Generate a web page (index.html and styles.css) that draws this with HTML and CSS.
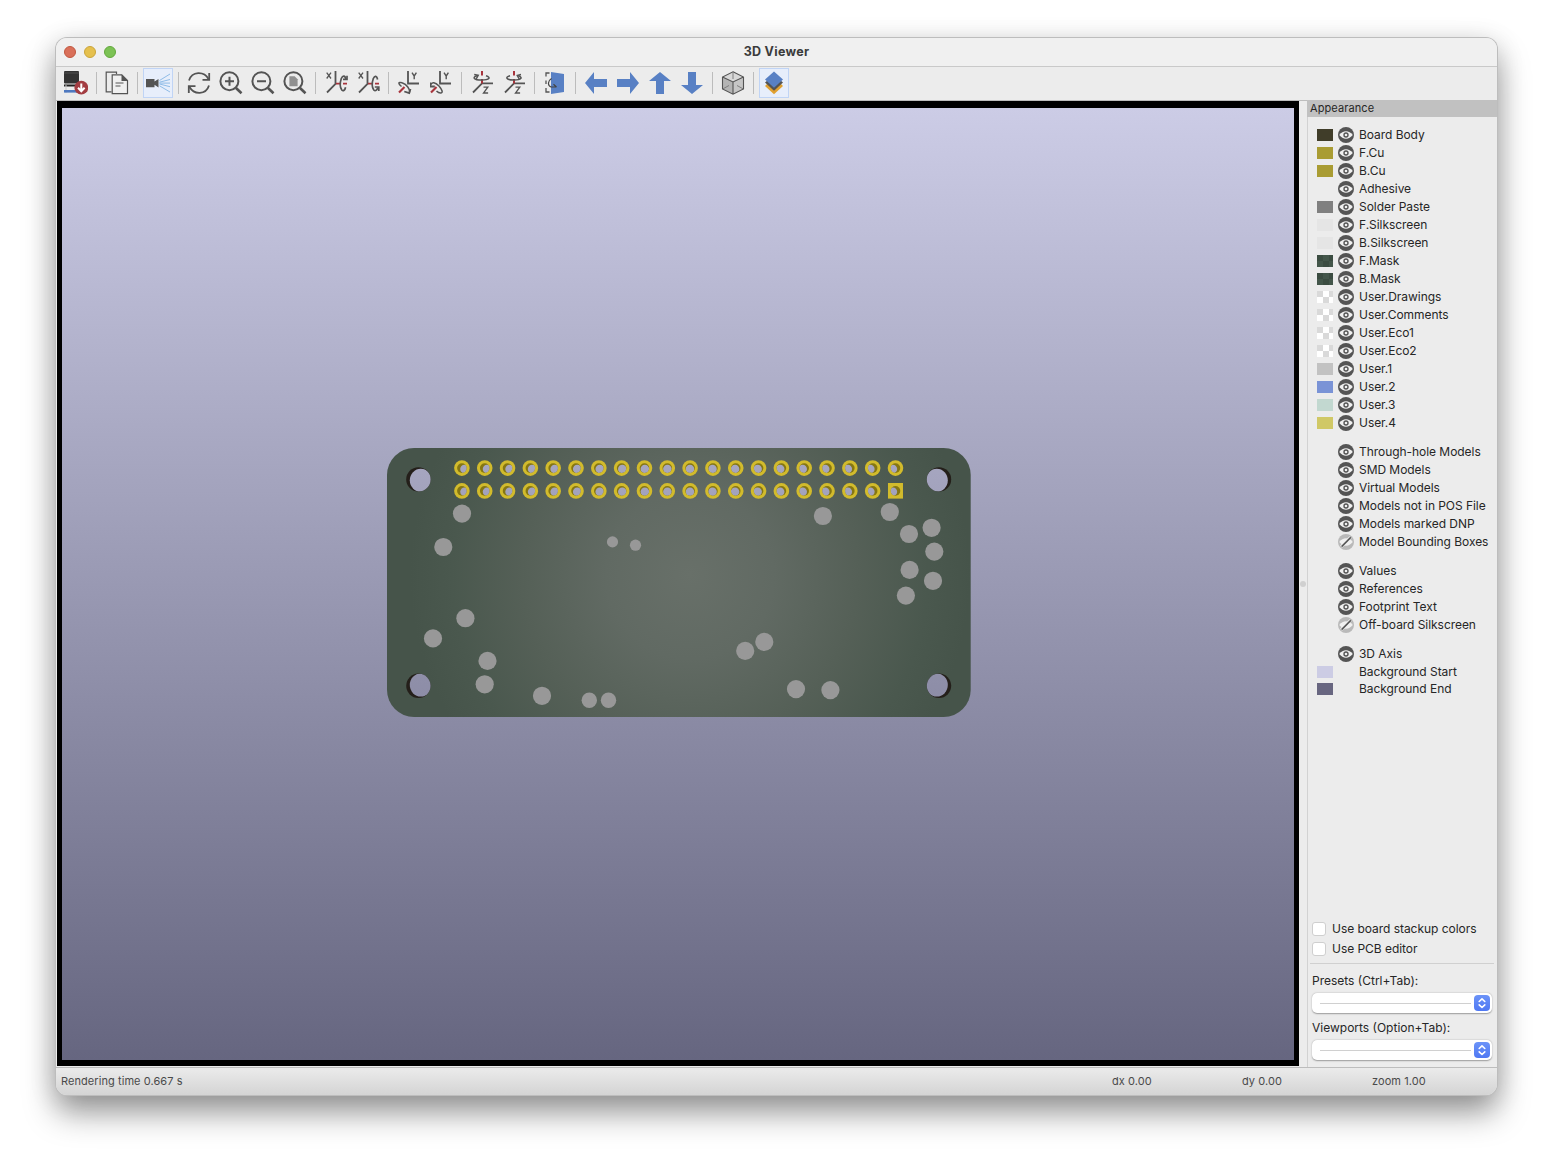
FILE: index.html
```
<!DOCTYPE html>
<html lang="en">
<head>
<meta charset="utf-8">
<title>3D Viewer</title>
<link rel="stylesheet" href="styles.css">
</head>
<body>
<svg class="defs" width="0" height="0">
  <defs>
    <symbol id="eye" viewBox="0 0 16 16"><circle cx="8" cy="8" r="8" fill="#545454"/><path d="M1.2 8Q4.2 4.3 8 4.3T14.8 8Q11.8 11.7 8 11.7T1.2 8Z" fill="#f0f0f0"/><circle cx="8" cy="8" r="2.7" fill="#545454"/><circle cx="8" cy="8" r="1.3" fill="#f0f0f0"/></symbol>
    <symbol id="off" viewBox="0 0 16 16"><circle cx="8" cy="8" r="8" fill="#b9b9b9"/><path d="M1.2 8Q4.2 4.3 8 4.3T14.8 8Q11.8 11.7 8 11.7T1.2 8Z" fill="#f0f0f0"/><path d="M3.2 12.6L12.6 3.2" stroke="#f0f0f0" stroke-width="3"/><path d="M3.6 12.6L12.8 3.4" stroke="#545454" stroke-width="1.5"/></symbol>
    <symbol id="arrow" viewBox="0 0 24 24"><path d="M1 12L10 1V8H23V16H10V23Z" fill="#5880c4"/></symbol>
    <symbol id="lens" viewBox="0 0 24 24"><circle cx="10.4" cy="10.2" r="9" fill="none" stroke="#545454" stroke-width="2"/><path d="M17 17L22.5 22.3" stroke="#545454" stroke-width="2.6"/></symbol>
    <symbol id="axis-x" viewBox="0 0 24 24"><path d="M10.5 0V13L2 21.5" fill="none" stroke="#545454" stroke-width="1.8"/><path d="M11 12.6H15.5M18 12.6H22" stroke="#a8343c" stroke-width="1.8"/><path d="M1.7 1.7L6 7.5M6 1.7L1.7 7.5" stroke="#545454" stroke-width="1.3"/></symbol>
    <symbol id="axis-y" viewBox="0 0 24 24"><path d="M10 0V12.5H21" fill="none" stroke="#545454" stroke-width="1.8"/><path d="M1 21.5L6.5 16" stroke="#a8343c" stroke-width="2.2"/><path d="M14 1.7L16.2 5V8.3M18.4 1.7L16.2 5" fill="none" stroke="#545454" stroke-width="1.4"/></symbol>
    <symbol id="axis-z" viewBox="0 0 24 24"><path d="M22 12.4H11L2 21.5" fill="none" stroke="#545454" stroke-width="1.8"/><path d="M11 0V4.5M11 8V12.5" stroke="#a8343c" stroke-width="2"/><path d="M12.5 16.2H16.8L12.5 22H17.1" fill="none" stroke="#545454" stroke-width="1.3"/></symbol>
    <symbol id="cup" viewBox="0 0 14 14"><path d="M4.2 5.5L7 2.8L9.8 5.5M4.2 8.8L7 11.5L9.8 8.8" fill="none" stroke="#fff" stroke-width="1.6" stroke-linecap="round" stroke-linejoin="round"/></symbol>
  </defs>
</svg>

<div class="window">
  <header class="titlebar">
    <div class="lights"><i class="light red"></i><i class="light yellow"></i><i class="light green"></i></div>
    <h1 class="title">3D Viewer</h1>
  </header>

  <nav class="toolbar">
    <span class="tool"><svg class="icon" viewBox="0 0 24 24"><rect x="0" y="0" width="15" height="12.5" rx="1" fill="#333"/><path d="M0 2H15" stroke="#666" stroke-width=".6"/><path d="M0 14.5H15" stroke="#222" stroke-width="2"/><path d="M2 14V18M13 14V18M2 18V22M13 18V22" stroke="#c8c8c8"/><rect x="0" y="19" width="13" height="2.6" fill="#4f79c0"/><circle cx="17.3" cy="16.7" r="6.9" fill="#a33d42"/><path d="M17.3 12.5V19.5M14 16.8L17.3 20.2L20.6 16.8" fill="none" stroke="#fff" stroke-width="2"/></svg></span>
    <i class="sep"></i>
    <span class="tool"><svg class="icon" viewBox="0 0 24 24"><path d="M11.5 3V1.2H1.2V20.8H6.5" fill="none" stroke="#545454" stroke-width="1.2"/><path d="M7.2 3.8H16.8L22.5 9.5V22.6H7.2Z" fill="#f0f0f0" stroke="#545454" stroke-width="1.2"/><path d="M16.5 3.5V10H23Z" fill="#545454"/><path d="M10.5 12H18.5M10.5 15H15.5" stroke="#545454" stroke-width="1.1"/></svg></span>
    <i class="sep"></i>
    <span class="tool on"><svg class="icon" viewBox="0 0 24 24"><path d="M0 8H8.5V10.5L12.5 8V16.5L8.5 13.8V16.3H0Z" fill="#545454"/><path d="M13.5 9.5L24 3M13.5 11.2L24 8.5M13.5 13L24 15.7M13.5 14.8L24 21M13.5 12.1H24" stroke="#85b5e4" stroke-width=".9"/></svg></span>
    <i class="sep"></i>
    <span class="tool"><svg class="icon" viewBox="0 0 24 24"><path d="M2 9.5C5 0 17 0 21.5 8M22 14.5C19 24 7 24 2.5 16" fill="none" stroke="#545454" stroke-width="1.8"/><path d="M22.2 2V8.8H15.5M1.8 22V15.2H8.5" fill="none" stroke="#545454" stroke-width="1.8"/></svg></span>
    <span class="tool"><svg class="icon" viewBox="0 0 24 24"><use href="#lens"/><path d="M6 10.2H15M10.5 5.7V14.7" stroke="#545454" stroke-width="2"/></svg></span>
    <span class="tool"><svg class="icon" viewBox="0 0 24 24"><use href="#lens"/><path d="M6 10.2H15" stroke="#545454" stroke-width="2"/></svg></span>
    <span class="tool"><svg class="icon" viewBox="0 0 24 24"><use href="#lens"/><path d="M6.4 5.2H11.6L14.6 8.2V15.2H6.4Z" fill="#909090"/></svg></span>
    <i class="sep"></i>
    <span class="tool axis"><svg class="icon" viewBox="0 0 24 24"><use href="#axis-x"/><path d="M20.8 8.2C20.2 4.4 17.8 4.2 16.3 7.5C14.8 12 15 16.5 16.8 19C18.3 20.6 20 19 20.6 16.2" fill="none" stroke="#545454" stroke-width="1.7"/><path d="M18 8.4H22V4.8" fill="none" stroke="#545454" stroke-width="1.7"/></svg></span>
    <span class="tool axis"><svg class="icon" viewBox="0 0 24 24"><use href="#axis-x"/><path d="M20.6 8.5C20 4.8 17.8 4.2 16.3 7.5C14.8 12 15 16.5 16.8 19C18.3 20.6 20 19.3 20.8 16.5" fill="none" stroke="#545454" stroke-width="1.7"/><path d="M17.8 16H21.8V20" fill="none" stroke="#545454" stroke-width="1.7"/></svg></span>
    <i class="sep"></i>
    <span class="tool axis"><svg class="icon" viewBox="0 0 24 24"><use href="#axis-y"/><path d="M3.5 15.5C-.5 12.5 .5 10.5 4 11.8C9 13.5 12 18 11.5 21.5" fill="none" stroke="#545454" stroke-width="1.5"/><path d="M6.3 20.5L11.2 22.2L12.5 18" fill="none" stroke="#545454" stroke-width="1.8"/></svg></span>
    <span class="tool axis"><svg class="icon" viewBox="0 0 24 24"><use href="#axis-y"/><path d="M.5 14.5C1.5 10 5.5 11.5 9 15C12 18.5 13.5 22 10.5 22Q8.5 22 6.5 20" fill="none" stroke="#545454" stroke-width="1.5"/><path d="M.2 11.5V15.5H4.8" fill="none" stroke="#545454" stroke-width="1.8"/></svg></span>
    <i class="sep"></i>
    <span class="tool axis"><svg class="icon" viewBox="0 0 24 24"><use href="#axis-z"/><path d="M6 4.7C1 6.2 2.5 9 10.5 9C18.5 9 20.5 6.5 15 4.8" fill="none" stroke="#545454" stroke-width="1.5"/><path d="M3.2 3.6L7.2 4.4L5.2 8" fill="none" stroke="#545454" stroke-width="1.5"/></svg></span>
    <span class="tool axis"><svg class="icon" viewBox="0 0 24 24"><use href="#axis-z"/><path d="M7 4.7C1.5 6.2 3.5 9 11 9C18.5 9 20 6.5 15.5 4.8" fill="none" stroke="#545454" stroke-width="1.5"/><path d="M18 3.6L14.3 4.4L16.2 8" fill="none" stroke="#545454" stroke-width="1.5"/></svg></span>
    <i class="sep"></i>
    <span class="tool"><svg class="icon" viewBox="0 0 24 24"><path d="M8 1L21 3V21L8 23Z" fill="#5880c4"/><path d="M6.5 2H3V5.5M3 9.5V13M3 17V21H6.5" fill="none" stroke="#545454" stroke-width="1.3"/><path d="M8.5 7.5C4.5 10 4.5 14.5 8 16L13.5 16M10.5 13.2L13.5 16" fill="none" stroke="#444" stroke-width="1.2"/></svg></span>
    <i class="sep"></i>
    <span class="tool"><svg class="icon"><use href="#arrow"/></svg></span>
    <span class="tool"><svg class="icon right"><use href="#arrow"/></svg></span>
    <span class="tool"><svg class="icon up"><use href="#arrow"/></svg></span>
    <span class="tool"><svg class="icon down"><use href="#arrow"/></svg></span>
    <i class="sep"></i>
    <span class="tool"><svg class="icon" viewBox="0 0 24 24"><path d="M12 .8L22.5 6V18L12 23.2L1.5 18V6Z" fill="#b4b4b4"/><path d="M12 .8L22.5 6L12 11L1.5 6Z" fill="#d8d8d8"/><path d="M12 11L22.5 6V18L12 23.2Z" fill="#c6c6c6"/><path d="M12 .8L22.5 6V18L12 23.2L1.5 18V6ZM1.5 6L12 11L22.5 6M12 11V23.2" fill="none" stroke="#545454" stroke-width="1.1"/><path d="M12 1V8M2 17.8L8 14.5M22 17.8L16 14.5" stroke="#777" stroke-width=".9"/></svg></span>
    <i class="sep"></i>
    <span class="tool on"><svg class="icon" viewBox="0 0 24 24"><path d="M12 6L21 15L12 23.3L3 15Z" fill="#e0a030"/><path d="M12 4L21 11.5L12 19.8L3 11.5Z" fill="#545454"/><path d="M12 .5L21 8.5L12 16.8L3 8.5Z" fill="#5880c4"/></svg></span>
  </nav>

  <main class="content">
    <section class="viewport">
      <svg class="scene" viewBox="62 108 1232 952">
        <defs>
          <linearGradient id="sky" gradientUnits="userSpaceOnUse" x1="0" y1="108" x2="0" y2="1060"><stop offset="0" stop-color="#cccce6"/><stop offset="1" stop-color="#666680"/></linearGradient>
          <radialGradient id="mask" gradientUnits="userSpaceOnUse" cx="690" cy="575" r="280"><stop offset="0" stop-color="#687069"/><stop offset=".3" stop-color="#616a63"/><stop offset=".6" stop-color="#556057"/><stop offset=".85" stop-color="#4a584e"/><stop offset="1" stop-color="#46544a"/></radialGradient>
          <clipPath id="hole-tl"><circle cx="418.4" cy="479.4" r="12.2"/></clipPath>
          <clipPath id="hole-tr"><circle cx="939" cy="479.4" r="12.2"/></clipPath>
          <clipPath id="hole-bl"><circle cx="418.4" cy="685.8" r="12.2"/></clipPath>
          <clipPath id="hole-br"><circle cx="939" cy="685.8" r="12.2"/></clipPath>
        </defs>
        <rect x="62" y="108" width="1232" height="952" fill="url(#sky)"/>
        <rect x="387" y="448" width="583.7" height="269" rx="27" fill="url(#mask)"/>
        <g fill="#241f1a"><circle cx="418.4" cy="479.4" r="12.2"/><circle cx="939" cy="479.4" r="12.2"/><circle cx="418.4" cy="685.8" r="12.2"/><circle cx="939" cy="685.8" r="12.2"/></g>
        <g fill="url(#sky)">
          <g clip-path="url(#hole-tl)"><ellipse cx="420.8" cy="480.3" rx="11" ry="11.5"/></g>
          <g clip-path="url(#hole-tr)"><ellipse cx="936.8" cy="480.3" rx="11" ry="11.5"/></g>
          <g clip-path="url(#hole-bl)"><ellipse cx="420.8" cy="685" rx="11" ry="11.5"/></g>
          <g clip-path="url(#hole-br)"><ellipse cx="936.8" cy="685" rx="11" ry="11.5"/></g>
        </g>
        <g fill="#989898">
          <circle cx="462" cy="513.6" r="9.1"/><circle cx="443.3" cy="547" r="9.1"/><circle cx="612.5" cy="541.9" r="5.6"/><circle cx="635.5" cy="545.2" r="5.6"/>
          <circle cx="822.9" cy="516" r="9.1"/><circle cx="889.8" cy="512" r="9.1"/><circle cx="909" cy="534" r="9.1"/><circle cx="931.6" cy="527.8" r="9.1"/><circle cx="934.3" cy="551.6" r="9.1"/><circle cx="909.6" cy="569.9" r="9.1"/><circle cx="933" cy="580.8" r="9.1"/><circle cx="905.9" cy="595.6" r="9.1"/>
          <circle cx="465.4" cy="618.2" r="9.1"/><circle cx="433" cy="638.4" r="9.1"/><circle cx="487.5" cy="660.9" r="9.1"/><circle cx="484.7" cy="684.3" r="9.1"/><circle cx="542" cy="695.8" r="9.1"/><circle cx="589.3" cy="700.3" r="7.7"/><circle cx="608.5" cy="700.3" r="7.7"/>
          <circle cx="745.2" cy="650.9" r="9.1"/><circle cx="764.3" cy="641.9" r="9.1"/><circle cx="796" cy="689.1" r="9.1"/><circle cx="830.4" cy="690.1" r="9.1"/>
        </g>
        <g id="pads"></g>
      </svg>
    </section>
    <div class="sash"><i class="grip"></i></div>

    <aside class="panel">
      <h2 class="caption">Appearance</h2>
      <ul class="layers">
        <li><i class="swatch body"></i><svg class="eye"><use href="#eye"/></svg>Board Body</li>
        <li><i class="swatch copper"></i><svg class="eye"><use href="#eye"/></svg>F.Cu</li>
        <li><i class="swatch copper"></i><svg class="eye"><use href="#eye"/></svg>B.Cu</li>
        <li><i class="swatch"></i><svg class="eye"><use href="#eye"/></svg>Adhesive</li>
        <li><i class="swatch paste"></i><svg class="eye"><use href="#eye"/></svg>Solder Paste</li>
        <li><i class="swatch silk"></i><svg class="eye"><use href="#eye"/></svg>F.Silkscreen</li>
        <li><i class="swatch silk"></i><svg class="eye"><use href="#eye"/></svg>B.Silkscreen</li>
        <li><i class="swatch mask"></i><svg class="eye"><use href="#eye"/></svg>F.Mask</li>
        <li><i class="swatch mask"></i><svg class="eye"><use href="#eye"/></svg>B.Mask</li>
        <li><i class="swatch clear"></i><svg class="eye"><use href="#eye"/></svg>User.Drawings</li>
        <li><i class="swatch clear"></i><svg class="eye"><use href="#eye"/></svg>User.Comments</li>
        <li><i class="swatch clear"></i><svg class="eye"><use href="#eye"/></svg>User.Eco1</li>
        <li><i class="swatch clear"></i><svg class="eye"><use href="#eye"/></svg>User.Eco2</li>
        <li><i class="swatch user1"></i><svg class="eye"><use href="#eye"/></svg>User.1</li>
        <li><i class="swatch user2"></i><svg class="eye"><use href="#eye"/></svg>User.2</li>
        <li><i class="swatch user3"></i><svg class="eye"><use href="#eye"/></svg>User.3</li>
        <li><i class="swatch user4"></i><svg class="eye"><use href="#eye"/></svg>User.4</li>
      </ul>
      <ul class="layers">
        <li><i class="swatch"></i><svg class="eye"><use href="#eye"/></svg>Through-hole Models</li>
        <li><i class="swatch"></i><svg class="eye"><use href="#eye"/></svg>SMD Models</li>
        <li><i class="swatch"></i><svg class="eye"><use href="#eye"/></svg>Virtual Models</li>
        <li><i class="swatch"></i><svg class="eye"><use href="#eye"/></svg>Models not in POS File</li>
        <li><i class="swatch"></i><svg class="eye"><use href="#eye"/></svg>Models marked DNP</li>
        <li><i class="swatch"></i><svg class="eye"><use href="#off"/></svg>Model Bounding Boxes</li>
      </ul>
      <ul class="layers">
        <li><i class="swatch"></i><svg class="eye"><use href="#eye"/></svg>Values</li>
        <li><i class="swatch"></i><svg class="eye"><use href="#eye"/></svg>References</li>
        <li><i class="swatch"></i><svg class="eye"><use href="#eye"/></svg>Footprint Text</li>
        <li><i class="swatch"></i><svg class="eye"><use href="#off"/></svg>Off-board Silkscreen</li>
      </ul>
      <ul class="layers">
        <li><i class="swatch"></i><svg class="eye"><use href="#eye"/></svg>3D Axis</li>
        <li><i class="swatch sky-start"></i><span class="eye"></span>Background Start</li>
        <li class="tight"><i class="swatch sky-end"></i><span class="eye"></span>Background End</li>
      </ul>
      <div class="options">
        <label class="check"><i class="box"></i>Use board stackup colors</label>
        <label class="check"><i class="box"></i>Use PCB editor</label>
        <div class="rule"></div>
        <div class="field">Presets (Ctrl+Tab):</div>
        <div class="combo"><i class="dash"></i><svg class="stepper"><use href="#cup"/></svg></div>
        <div class="field">Viewports (Option+Tab):</div>
        <div class="combo"><i class="dash"></i><svg class="stepper"><use href="#cup"/></svg></div>
      </div>
    </aside>
  </main>

  <footer class="status"><span class="time">Rendering time 0.667 s</span><span class="cell">dx 0.00</span><span class="cell">dy 0.00</span><span class="cell">zoom 1.00</span></footer>
</div>
<script src="pads.js"></script>
</body>
</html>
```
FILE: pads.js
```
// Draws the 2x20 header: plated rings whose holes shift with the viewing angle.
const NS = "http://www.w3.org/2000/svg";
const group = document.getElementById("pads");
function add(parent, name, attrs) {
  const el = document.createElementNS(NS, name);
  for (const key in attrs) el.setAttribute(key, attrs[key]);
  parent.appendChild(el);
  return el;
}
for (let row = 0; row < 2; row++) {
  for (let col = 0; col < 20; col++) {
    const x = 461.9 + col * 22.82;
    const y = row ? 490.9 : 468.1;
    const shift = (678 - x) / 216 * 2.6;
    const id = "pad" + row + "-" + col;
    if (row && col === 19) add(group, "rect", { x: x - 7.5, y: y - 7.9, width: 15, height: 15.6, fill: "#d2bb2c" });
    else add(group, "circle", { cx: x, cy: y, r: 7.8, fill: "#d2bb2c" });
    add(group, "circle", { cx: x, cy: y, r: 4.8, fill: "#857613" });
    const clip = add(group, "clipPath", { id });
    add(clip, "circle", { cx: x, cy: y, r: 4.8 });
    add(group, "ellipse", { cx: x + shift, cy: y + 0.9, rx: 4.3, ry: 4.3, fill: "url(#sky)", "clip-path": "url(#" + id + ")" });
  }
}
```
FILE: styles.css
```
* { box-sizing: border-box; }
body { margin: 0; padding: 38px 56px 0; height: 1169px; overflow: hidden; background: #fff; font: 12px/18px Inter, "Liberation Sans", sans-serif; color: #262626; }
.defs { position: absolute; }
.window { width: 1441px; height: 1057px; display: flex; flex-direction: column; background: #ececec; border-radius: 11px; overflow: hidden; box-shadow: 0 0 0 1px #bdbdbd, 0 18px 32px rgba(0,0,0,.38), 0 4px 28px rgba(0,0,0,.14); }
.titlebar { display: grid; grid-template-columns: 1fr auto 1fr; align-items: center; height: 29px; padding-left: 8px; background: #f0f0f0; border-bottom: 1px solid #c9c9c9; }
.lights { display: flex; gap: 8px; }
.light { width: 12px; height: 12px; border-radius: 50%; border: 1px solid; }
.red { background: #d9705a; border-color: #c1573f; }
.yellow { background: #e5c04e; border-color: #caa43a; }
.green { background: #7cc255; border-color: #63a83d; }
.title { margin: 0; font-size: 12.5px; font-weight: 700; letter-spacing: .3px; color: #3b3b3b; transform: translateX(-4px); }
.toolbar { display: flex; align-items: center; height: 33px; padding: 0 0 2px 4px; }
.tool { width: 32px; height: 30px; padding: 3px 4px; }
.tool.axis { padding: 3px 3px 3px 5px; }
.tool.on { width: 30px; margin: 0 1px; padding: 2px; background: #e7eefb; border: 1px solid #c0d4f5; }
.icon { display: block; width: 24px; height: 24px; }
.right { transform: rotate(180deg); }
.up { transform: rotate(90deg); }
.down { transform: rotate(-90deg); }
.sep { width: 1px; height: 22px; margin: 0 4px; background: #bcbcbc; }
.content { display: flex; height: 967px; border-top: 1px solid #bdbdbd; }
.viewport { width: 1242px; height: 965px; margin-left: 1px; padding: 7px 5px 6px; background: #000; }
.scene { display: block; width: 1232px; height: 952px; }
.sash { display: flex; align-items: center; width: 9px; padding-left: 1px; border-right: 1px solid #d2d2d2; }
.grip { width: 6px; height: 6px; border-radius: 50%; background: #d0d0d0; }
.panel { width: 190px; margin: -1px 0 0 -1px; display: flex; flex-direction: column; border-left: 1px solid #d2d2d2; }
.caption { margin: 0 0 9px -1px; height: 17px; padding-left: 3px; background: #c1c1c1; font-size: 11px; line-height: 17px; font-weight: 400; letter-spacing: .1px; }
.layers { list-style: none; margin: 0 0 11px; padding: 0 0 0 9px; letter-spacing: -.05px; }
.layers li { display: flex; align-items: center; height: 18px; white-space: nowrap; }
.layers .tight { height: 16px; }
.swatch { width: 16px; height: 12px; margin-right: 5px; }
.eye { width: 16px; height: 16px; margin-right: 5px; }
.body { background: #403d29; }
.copper { background: #a99c33; }
.paste { background: #808080; }
.silk { background: #e5e5e5; }
.mask { background: conic-gradient(#43564a 25%, #3b4c41 0 50%, #43564a 0 75%, #3b4c41 0) 0 0 / 12px 12px; }
.clear { background: conic-gradient(#d9d9d9 25%, #fff 0 50%, #d9d9d9 0 75%, #fff 0) 6px 6px / 12px 12px; background: conic-gradient(#fff 25%, #d9d9d9 0 50%, #fff 0 75%, #d9d9d9 0) 0 0 / 12px 12px; }
.user1 { background: #c2c2c2; }
.user2 { background: #7a93d6; }
.user3 { background: #c2d8d0; }
.user4 { background: #d0c866; }
.sky-start { background: #cccce4; }
.sky-end { background: #686680; }
.options { margin-top: auto; padding: 0 5px 7px 4px; }
.check { display: flex; align-items: center; gap: 6px; height: 20px; letter-spacing: -.04px; }
.box { width: 14px; height: 14px; border-radius: 3px; background: #fff; border: 1px solid #cfcfcf; }
.rule { height: 1px; margin: 4px -2px 9px; background: #d0d0d0; }
.field { height: 16px; line-height: 16px; }
.combo { display: flex; align-items: center; justify-content: space-between; width: 180px; height: 20px; margin: 4px 0 7px; padding: 0 2px 0 8px; background: #fff; border-radius: 5px; box-shadow: 0 .5px 1.5px rgba(0,0,0,.35); }
.combo:last-child { margin-bottom: 0; }
.dash { width: 151px; height: 1px; background: #d0d0d0; }
.stepper { width: 16px; height: 16px; padding: 1px; border-radius: 4px; background: linear-gradient(#6b93f8, #4f78f3); }
.status { display: flex; align-items: center; height: 28px; padding: 0 0 2px 5px; border-top: 1px solid #bdbdbd; background: linear-gradient(#ebebeb, #d4d4d4); font-size: 11px; letter-spacing: .07px; color: #4a4a4a; }
.time { width: 1051px; flex: none; }
.cell { width: 130px; flex: none; }
```
